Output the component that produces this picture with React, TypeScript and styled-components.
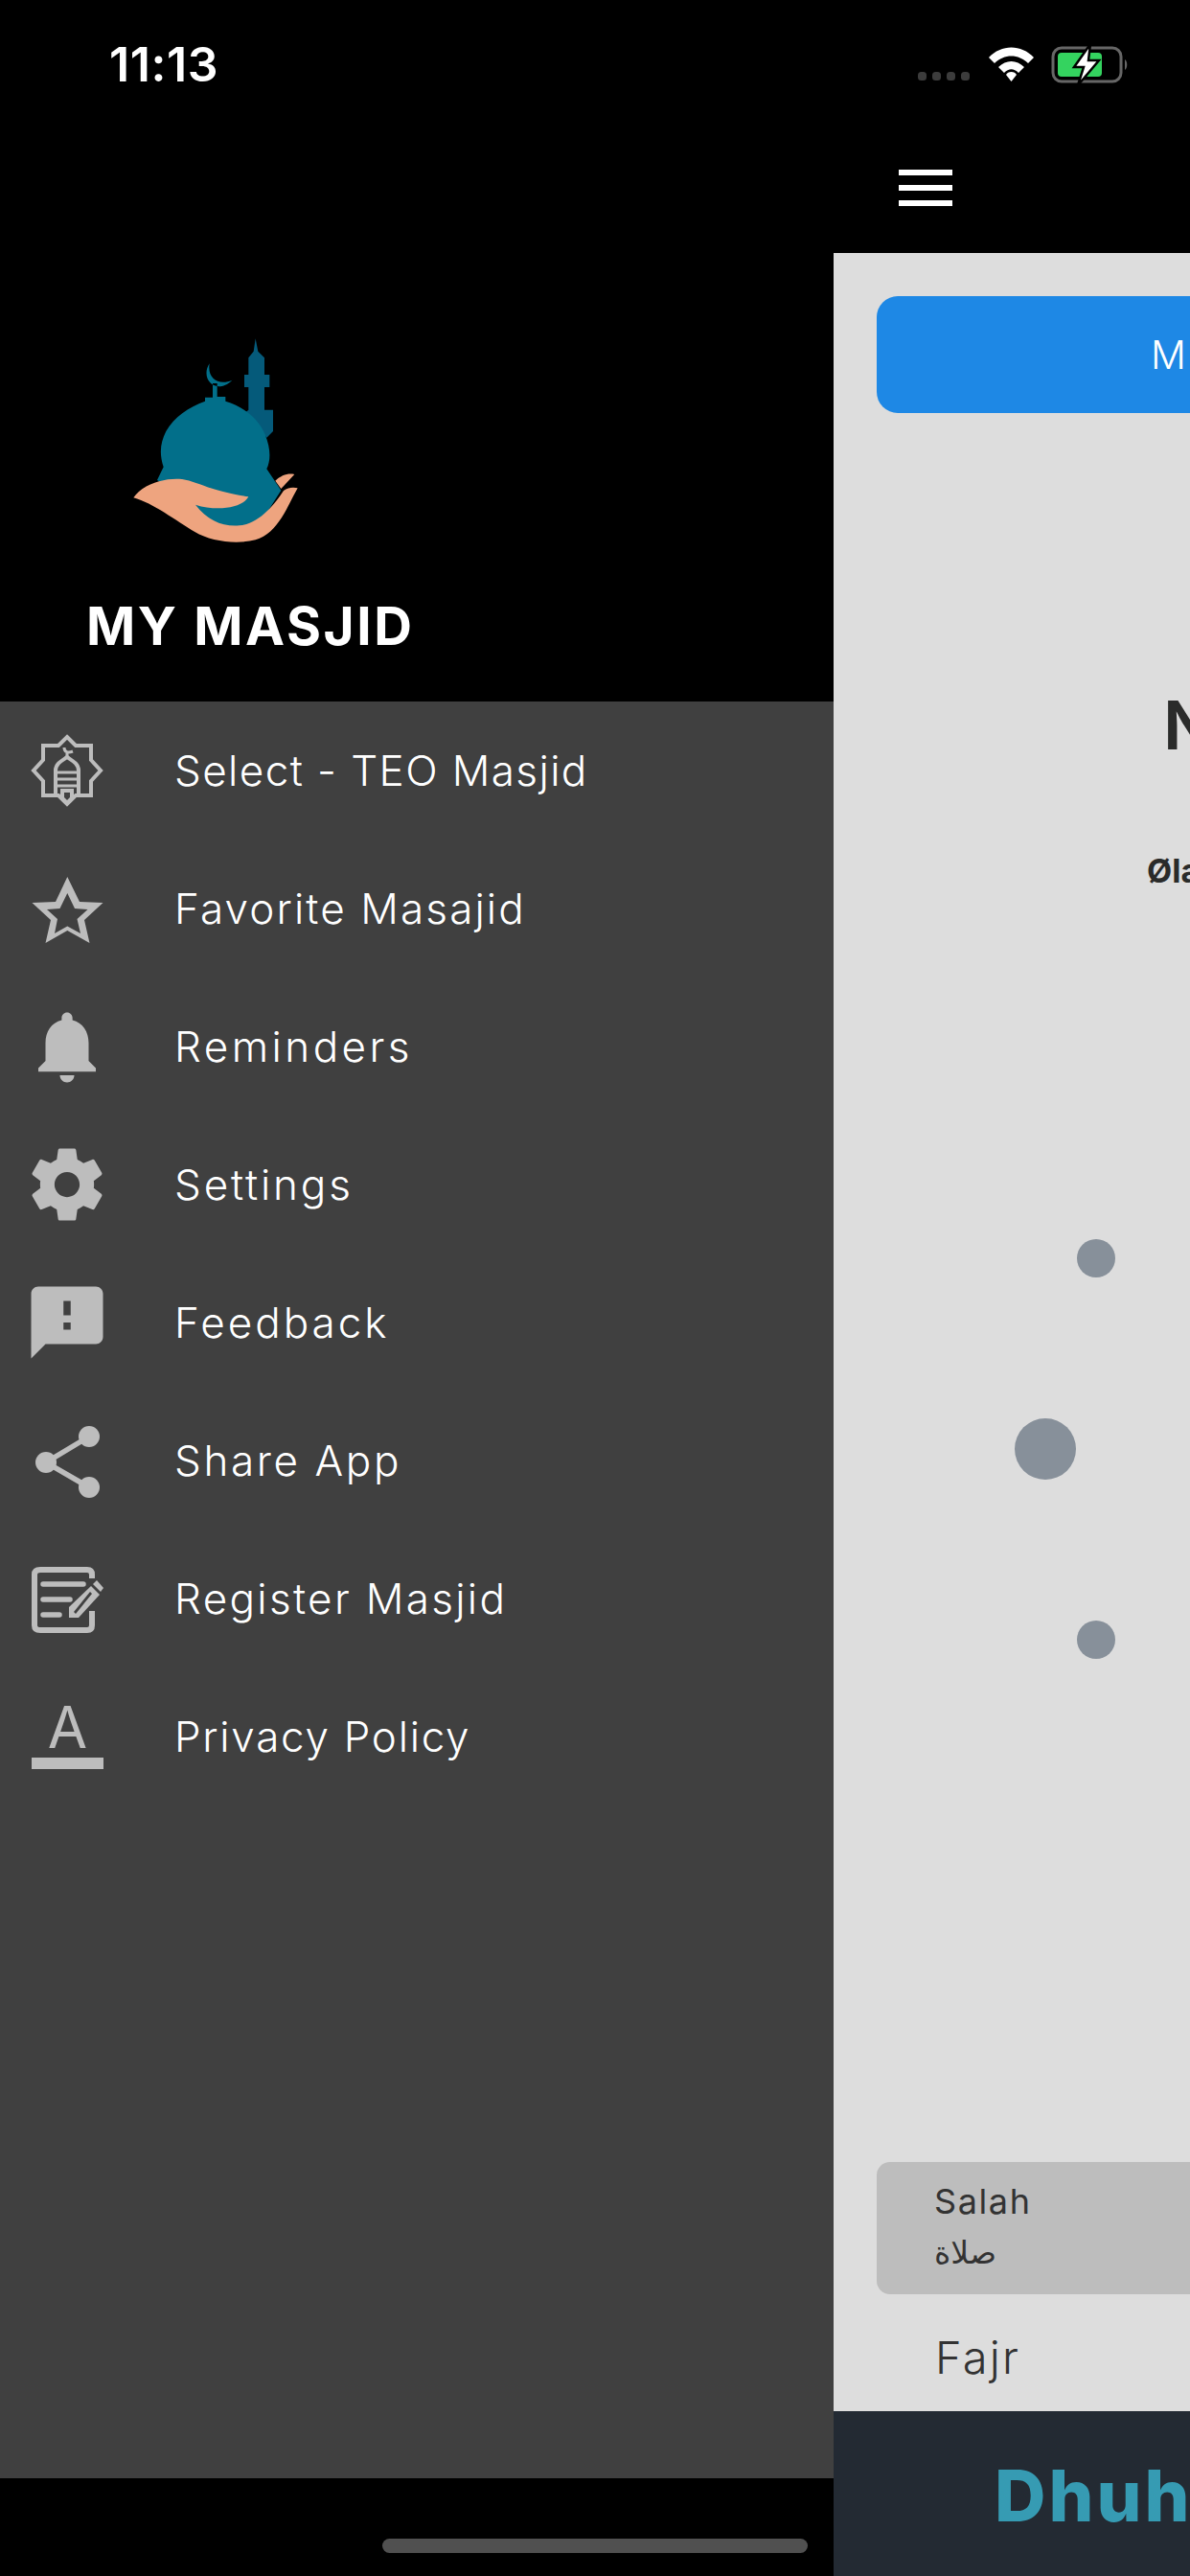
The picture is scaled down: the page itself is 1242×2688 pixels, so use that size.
import React from 'react';
import styled, { createGlobalStyle } from 'styled-components';

const Global = createGlobalStyle`
  html, body { margin: 0; padding: 0; background: #000; }
  body { font-family: Inter, "Liberation Sans", sans-serif; overflow: hidden; }
  * { box-sizing: border-box; }
`;

const Page = styled.div`
  position: relative;
  display: flex;
  width: 1242px;
  height: 2688px;
  background: #000;
  overflow: hidden;
`;

const Drawer = styled.aside`
  display: flex;
  flex-direction: column;
  width: 870px;
  flex-shrink: 0;
`;

const DrawerHeader = styled.header`
  display: flex;
  flex-direction: column;
  height: 732px;
  background: #000;
  flex-shrink: 0;
`;

const Clock = styled.div`
  margin: 38px 0 0 114px;
  font-size: 50px;
  line-height: 58px;
  font-weight: 600;
  letter-spacing: 0.6px;
  color: #fff;
`;

const LogoMark = styled.svg`
  display: block;
  width: 400px;
  height: 370px;
  margin: 234px 0 0 60px;
  flex-shrink: 0;
`;

const AppTitle = styled.h1`
  margin: -80px 0 0 90px;
  font-size: 55px;
  line-height: 66px;
  font-weight: 700;
  letter-spacing: 2.6px;
  color: #fff;
`;

const Menu = styled.nav`
  flex: 1;
  display: flex;
  flex-direction: column;
  background: #404040;
`;

const MenuRow = styled.div`
  display: flex;
  align-items: center;
  height: 144px;
  padding-left: 25px;
  flex-shrink: 0;
`;

const MenuIcon = styled.svg`
  display: block;
  width: 90px;
  height: 90px;
  flex-shrink: 0;
  fill: #bdbdbd;
`;

const MenuLabel = styled.span<{ $track: number }>`
  margin-left: 67px;
  font-size: 44px;
  font-weight: 300;
  letter-spacing: ${p => p.$track}px;
  color: #fff;
  white-space: nowrap;
`;

const DrawerFoot = styled.div`
  height: 102px;
  background: #000;
  flex-shrink: 0;
`;

const HomeBar = styled.div`
  position: absolute;
  left: 399px;
  top: 2649px;
  width: 444px;
  height: 15px;
  border-radius: 8px;
  background: #505050;
`;

const Screen = styled.main`
  display: flex;
  flex-direction: column;
  width: 372px;
  flex-shrink: 0;
  overflow: hidden;
`;

const TopBar = styled.div`
  display: flex;
  flex-direction: column;
  height: 264px;
  background: #000;
  flex-shrink: 0;
`;

const StatusIcons = styled.svg`
  display: block;
  width: 230px;
  height: 50px;
  margin: 45px 0 0 85px;
  flex-shrink: 0;
`;

const Burger = styled.div`
  display: flex;
  flex-direction: column;
  gap: 10px;
  width: 56px;
  margin: 82px 0 0 68px;
`;

const BurgerBar = styled.span`
  display: block;
  height: 6px;
  background: #fff;
`;

const Content = styled.div`
  flex: 1;
  display: flex;
  flex-direction: column;
  width: 1242px;
  padding-top: 45px;
  background: #ddd;
`;

const BlueButton = styled.div`
  display: flex;
  align-items: center;
  width: 1152px;
  height: 122px;
  margin-left: 45px;
  padding-left: 286px;
  border-radius: 22px;
  background: #1e88e5;
  color: #fff;
  font-size: 41px;
  font-weight: 300;
`;

const MasjidName = styled.h2`
  margin: 284px 0 0 344px;
  font-size: 70px;
  line-height: 84px;
  font-weight: 600;
  color: #2a2b2a;
`;

const Address = styled.div`
  margin: 90px 0 0 327px;
  font-size: 34px;
  line-height: 40px;
  font-weight: 700;
  color: #2a2b2a;
`;

const Dots = styled.div`
  display: flex;
  flex-direction: column;
`;

const Dot = styled.span<{ $size: number; $left: number; $top: number }>`
  display: block;
  width: ${p => p.$size}px;
  height: ${p => p.$size}px;
  margin-left: ${p => p.$left}px;
  margin-top: ${p => p.$top}px;
  border-radius: 50%;
  background: #87909a;
`;

const TableHead = styled.div`
  display: flex;
  flex-direction: column;
  width: 1152px;
  height: 138px;
  margin: 525px 0 0 45px;
  padding: 18px 0 0 60px;
  border-radius: 14px;
  background: #bdbdbd;
  color: #333;
`;

const HeadLabel = styled.div`
  font-size: 36px;
  line-height: 46px;
  font-weight: 400;
  letter-spacing: 1.6px;
`;

const HeadArabic = styled.div`
  margin-top: 10px;
  font-family: "DejaVu Sans", sans-serif;
  font-size: 33px;
  line-height: 42px;
  font-weight: 400;
`;

const PrayerName = styled.div`
  margin: 38px 0 0 106px;
  font-size: 47px;
  line-height: 56px;
  font-weight: 300;
  letter-spacing: 2.2px;
  color: #333;
`;

const NextBar = styled.footer`
  display: flex;
  align-items: center;
  height: 172px;
  padding: 4px 0 0 168px;
  background: #232a33;
  flex-shrink: 0;
`;

const NextPrayer = styled.div`
  font-size: 74px;
  line-height: 84px;
  font-weight: 800;
  letter-spacing: 3px;
  color: #369bb3;
  white-space: nowrap;
`;

const Logo = () => (
  <LogoMark viewBox="0 0 1200 1110">
    <path
      fill="#055a7a"
      d="M620 70 L628 110 L648 130 L648 183 L664 183 L664 222 L648 222 L648 293 L675 293 L675 360 L655 380 L590 300 L598 293 L598 222 L585 222 L585 183 L598 183 L598 130 L614 110 Z"
    />
    <path
      fill="#026f8a"
      d="M476 148 C445 195 495 250 547 200 C505 218 468 195 476 148 Z M486 210 H500 V252 H526 V266 C580 282 630 320 650 370 C668 415 668 450 655 478 L700 545 L640 640 L560 665 L470 640 L420 580 L312 513 L332 472 C318 430 322 395 340 360 C365 315 410 285 462 266 V254 H486 Z"
    />
    <path
      fill="#eea47f"
      d="M238 568 C270 522 340 505 390 510 C440 518 480 548 598 565 C580 600 500 612 432 590 C470 640 520 660 570 655 C630 650 680 590 708 546 C722 536 738 534 752 538 C722 590 692 680 620 700 C560 715 480 705 430 675 C370 640 300 585 238 568 Z M682 515 C700 498 722 490 742 495 L700 540 Z"
    />
  </LogoMark>
);

const MosqueIcon = () => (
  <MenuIcon viewBox="0 0 90 90">
    <g fill="none" stroke="#bdbdbd" strokeWidth="4">
      <path d="M45 10 L54 19 H70 V34 L80 45 L70 56 V71 H54 L45 80 L36 71 H20 V56 L10 45 L20 34 V19 H36 Z" />
      <path d="M33 71 V45 C33 38 39 35 45 31 C51 35 57 38 57 45 V71" />
      <path d="M33 47 H57 M33 54 H57 M33 61 H57" strokeWidth="3" />
      <path d="M42 21 C42 26 46 27 51 25 M45 27 V31" strokeWidth="3" />
    </g>
    <path fill="#bdbdbd" d="M38 64 H52 V75 L45 82 L38 75 Z" />
    <path fill="#404040" d="M42 68 H48 V73 L45 76 L42 73 Z" />
  </MenuIcon>
);

const StarIcon = () => (
  <MenuIcon viewBox="0 0 90 90">
    <path
      fillRule="evenodd"
      transform="translate(-25 -896)"
      d="M70.3 908 L83 934 L107.5 935 L88 953 L93.5 977 L70.3 964 L47.5 977 L53 953 L33.5 935 L58 934 Z M70.3 925 L62.5 941 L49 942 L60 952 L57 967 L70.3 959.5 L84 967 L80.5 952 L91.5 942 L78 941 Z"
    />
  </MenuIcon>
);

const BellIcon = () => (
  <MenuIcon viewBox="0 0 24 24">
    <path d="M12 22c1.1 0 2-.9 2-2h-4c0 1.1.89 2 2 2zm6-6v-5c0-3.07-1.64-5.64-4.5-6.32V4c0-.83-.67-1.5-1.5-1.5s-1.5.67-1.5 1.5v.68C7.63 5.36 6 7.92 6 11v5l-2 2v1h16v-1l-2-2z" />
  </MenuIcon>
);

const GearIcon = () => (
  <MenuIcon viewBox="0 0 24 24">
    <path d="M19.43 12.98c.04-.32.07-.64.07-.98s-.03-.66-.07-.98l2.11-1.65c.19-.15.24-.42.12-.64l-2-3.46c-.12-.22-.39-.3-.61-.22l-2.49 1c-.52-.4-1.08-.73-1.69-.98l-.38-2.65C14.46 2.18 14.25 2 14 2h-4c-.25 0-.46.18-.49.42l-.38 2.65c-.61.25-1.17.59-1.69.98l-2.49-1c-.23-.09-.49 0-.61.22l-2 3.46c-.13.22-.07.49.12.64l2.11 1.65c-.04.32-.07.65-.07.98s.03.66.07.98l-2.11 1.65c-.19.15-.24.42-.12.64l2 3.46c.12.22.39.3.61.22l2.49-1c.52.4 1.08.73 1.69.98l.38 2.65c.03.24.24.42.49.42h4c.25 0 .46-.18.49-.42l.38-2.65c.61-.25 1.17-.59 1.69-.98l2.49 1c.23.09.49 0 .61-.22l2-3.46c.12-.22.07-.49-.12-.64l-2.11-1.65zM12 15.5c-1.93 0-3.5-1.57-3.5-3.5s1.57-3.5 3.5-3.5 3.5 1.57 3.5 3.5-1.57 3.5-3.5 3.5z" />
  </MenuIcon>
);

const FeedbackIcon = () => (
  <MenuIcon viewBox="0 0 24 24">
    <path d="M20 2H4c-1.1 0-1.99.9-1.99 2L2 22l4-4h14c1.1 0 2-.9 2-2V4c0-1.1-.9-2-2-2zm-7 12h-2v-2h2v2zm0-4h-2V6h2v4z" />
  </MenuIcon>
);

const ShareIcon = () => (
  <MenuIcon viewBox="0 0 90 90">
    <path d="M68 20 L23 47 L68 73" fill="none" stroke="#bdbdbd" strokeWidth="5.500" />
    <circle cx="68" cy="20" r="11" />
    <circle cx="23" cy="47" r="11" />
    <circle cx="68" cy="73" r="11" />
  </MenuIcon>
);

const RegisterIcon = () => (
  <MenuIcon viewBox="0 0 90 90">
    <g fill="none" stroke="#bdbdbd" strokeLinecap="round">
      <path d="M71 24 V20 Q71 15 66 15 H17 Q11 15 11 20 V73 Q11 78 17 78 H66 Q71 78 71 73 V58" strokeWidth="6" strokeLinecap="butt" />
      <path d="M20 30 H62 M20 46 H48 M20 62 H37" strokeWidth="5.500" />
    </g>
    <path d="M47 65 V54 L70 32 L79 41 L57 65 Z" />
    <path fill="#404040" d="M52 59 L69 38 L71 40 L54 61 Z" />
    <path d="M72 30 L76 26 L83 34 L80 38 Z" />
  </MenuIcon>
);

const PrivacyIcon = () => (
  <MenuIcon viewBox="0 0 90 90">
    <text x="45.500" y="57" textAnchor="middle" fontFamily="Inter, sans-serif" fontSize="60" fontWeight="400" fill="#bdbdbd">A</text>
    <rect x="8" y="67" width="75" height="12" />
  </MenuIcon>
);

const Status = () => (
  <StatusIcons viewBox="0 0 230 50">
    <g fill="#3c3c3c">
      <rect x="3" y="30" width="9" height="9" rx="3.5" />
      <rect x="18" y="30" width="9" height="9" rx="3.5" />
      <rect x="33" y="30" width="9" height="9" rx="3.5" />
      <rect x="48" y="30" width="9" height="9" rx="3.5" />
    </g>
    <g fill="#fff">
      <path d="M77 15 C90 1 111 1 124 15 L118 21 C108 11 93 11 83 21 Z" />
      <path d="M87 25 C95 17 106 17 114 25 L108 31 C103 26 98 26 93 31 Z" />
      <path d="M100.500 30 C103 30 105 31 106 33 L100.500 40 L95 33 C96 31 98 30 100.500 30 Z" />
    </g>
    <rect x="144" y="5" width="71" height="35" rx="9" fill="none" stroke="#666" strokeWidth="3" />
    <path d="M219 17 C222 19 222 26 219 28 Z" fill="#666" />
    <rect x="149" y="10" width="46" height="25" rx="4" fill="#34d35f" />
    <path d="M183 1 L166 25 H176 L170 44 L192 18 H181 Z" fill="#fff" stroke="#000" strokeWidth="2.500" />
  </StatusIcons>
);

const items: [React.ComponentType, string, number][] = [
  [MosqueIcon, 'Select - TEO Masjid', 1.41],
  [StarIcon, 'Favorite Masajid', 2.12],
  [BellIcon, 'Reminders', 3.45],
  [GearIcon, 'Settings', 2.85],
  [FeedbackIcon, 'Feedback', 3],
  [ShareIcon, 'Share App', 2.62],
  [RegisterIcon, 'Register Masjid', 2.33],
  [PrivacyIcon, 'Privacy Policy', 1.72],
];

export default function App() {
  return (
    <Page>
      <Global />
      <Drawer>
        <DrawerHeader>
          <Clock>11:13</Clock>
          <Logo />
          <AppTitle>MY MASJID</AppTitle>
        </DrawerHeader>
        <Menu>
          {items.map(([Icon, label, track]) => (
            <MenuRow key={label}>
              <Icon />
              <MenuLabel $track={track}>{label}</MenuLabel>
            </MenuRow>
          ))}
        </Menu>
        <DrawerFoot />
      </Drawer>
      <Screen>
        <TopBar>
          <Status />
          <Burger>
            <BurgerBar />
            <BurgerBar />
            <BurgerBar />
          </Burger>
        </TopBar>
        <Content>
          <BlueButton>M</BlueButton>
          <MasjidName>N</MasjidName>
          <Address>Øla</Address>
          <Dots>
            <Dot $size={40} $left={254} $top={364} />
            <Dot $size={64} $left={189} $top={147} />
            <Dot $size={40} $left={254} $top={147} />
          </Dots>
          <TableHead>
            <HeadLabel>Salah</HeadLabel>
            <HeadArabic>صلاة</HeadArabic>
          </TableHead>
          <PrayerName>Fajr</PrayerName>
        </Content>
        <NextBar>
          <NextPrayer>Dhuh</NextPrayer>
        </NextBar>
      </Screen>
      <HomeBar />
    </Page>
  );
}
